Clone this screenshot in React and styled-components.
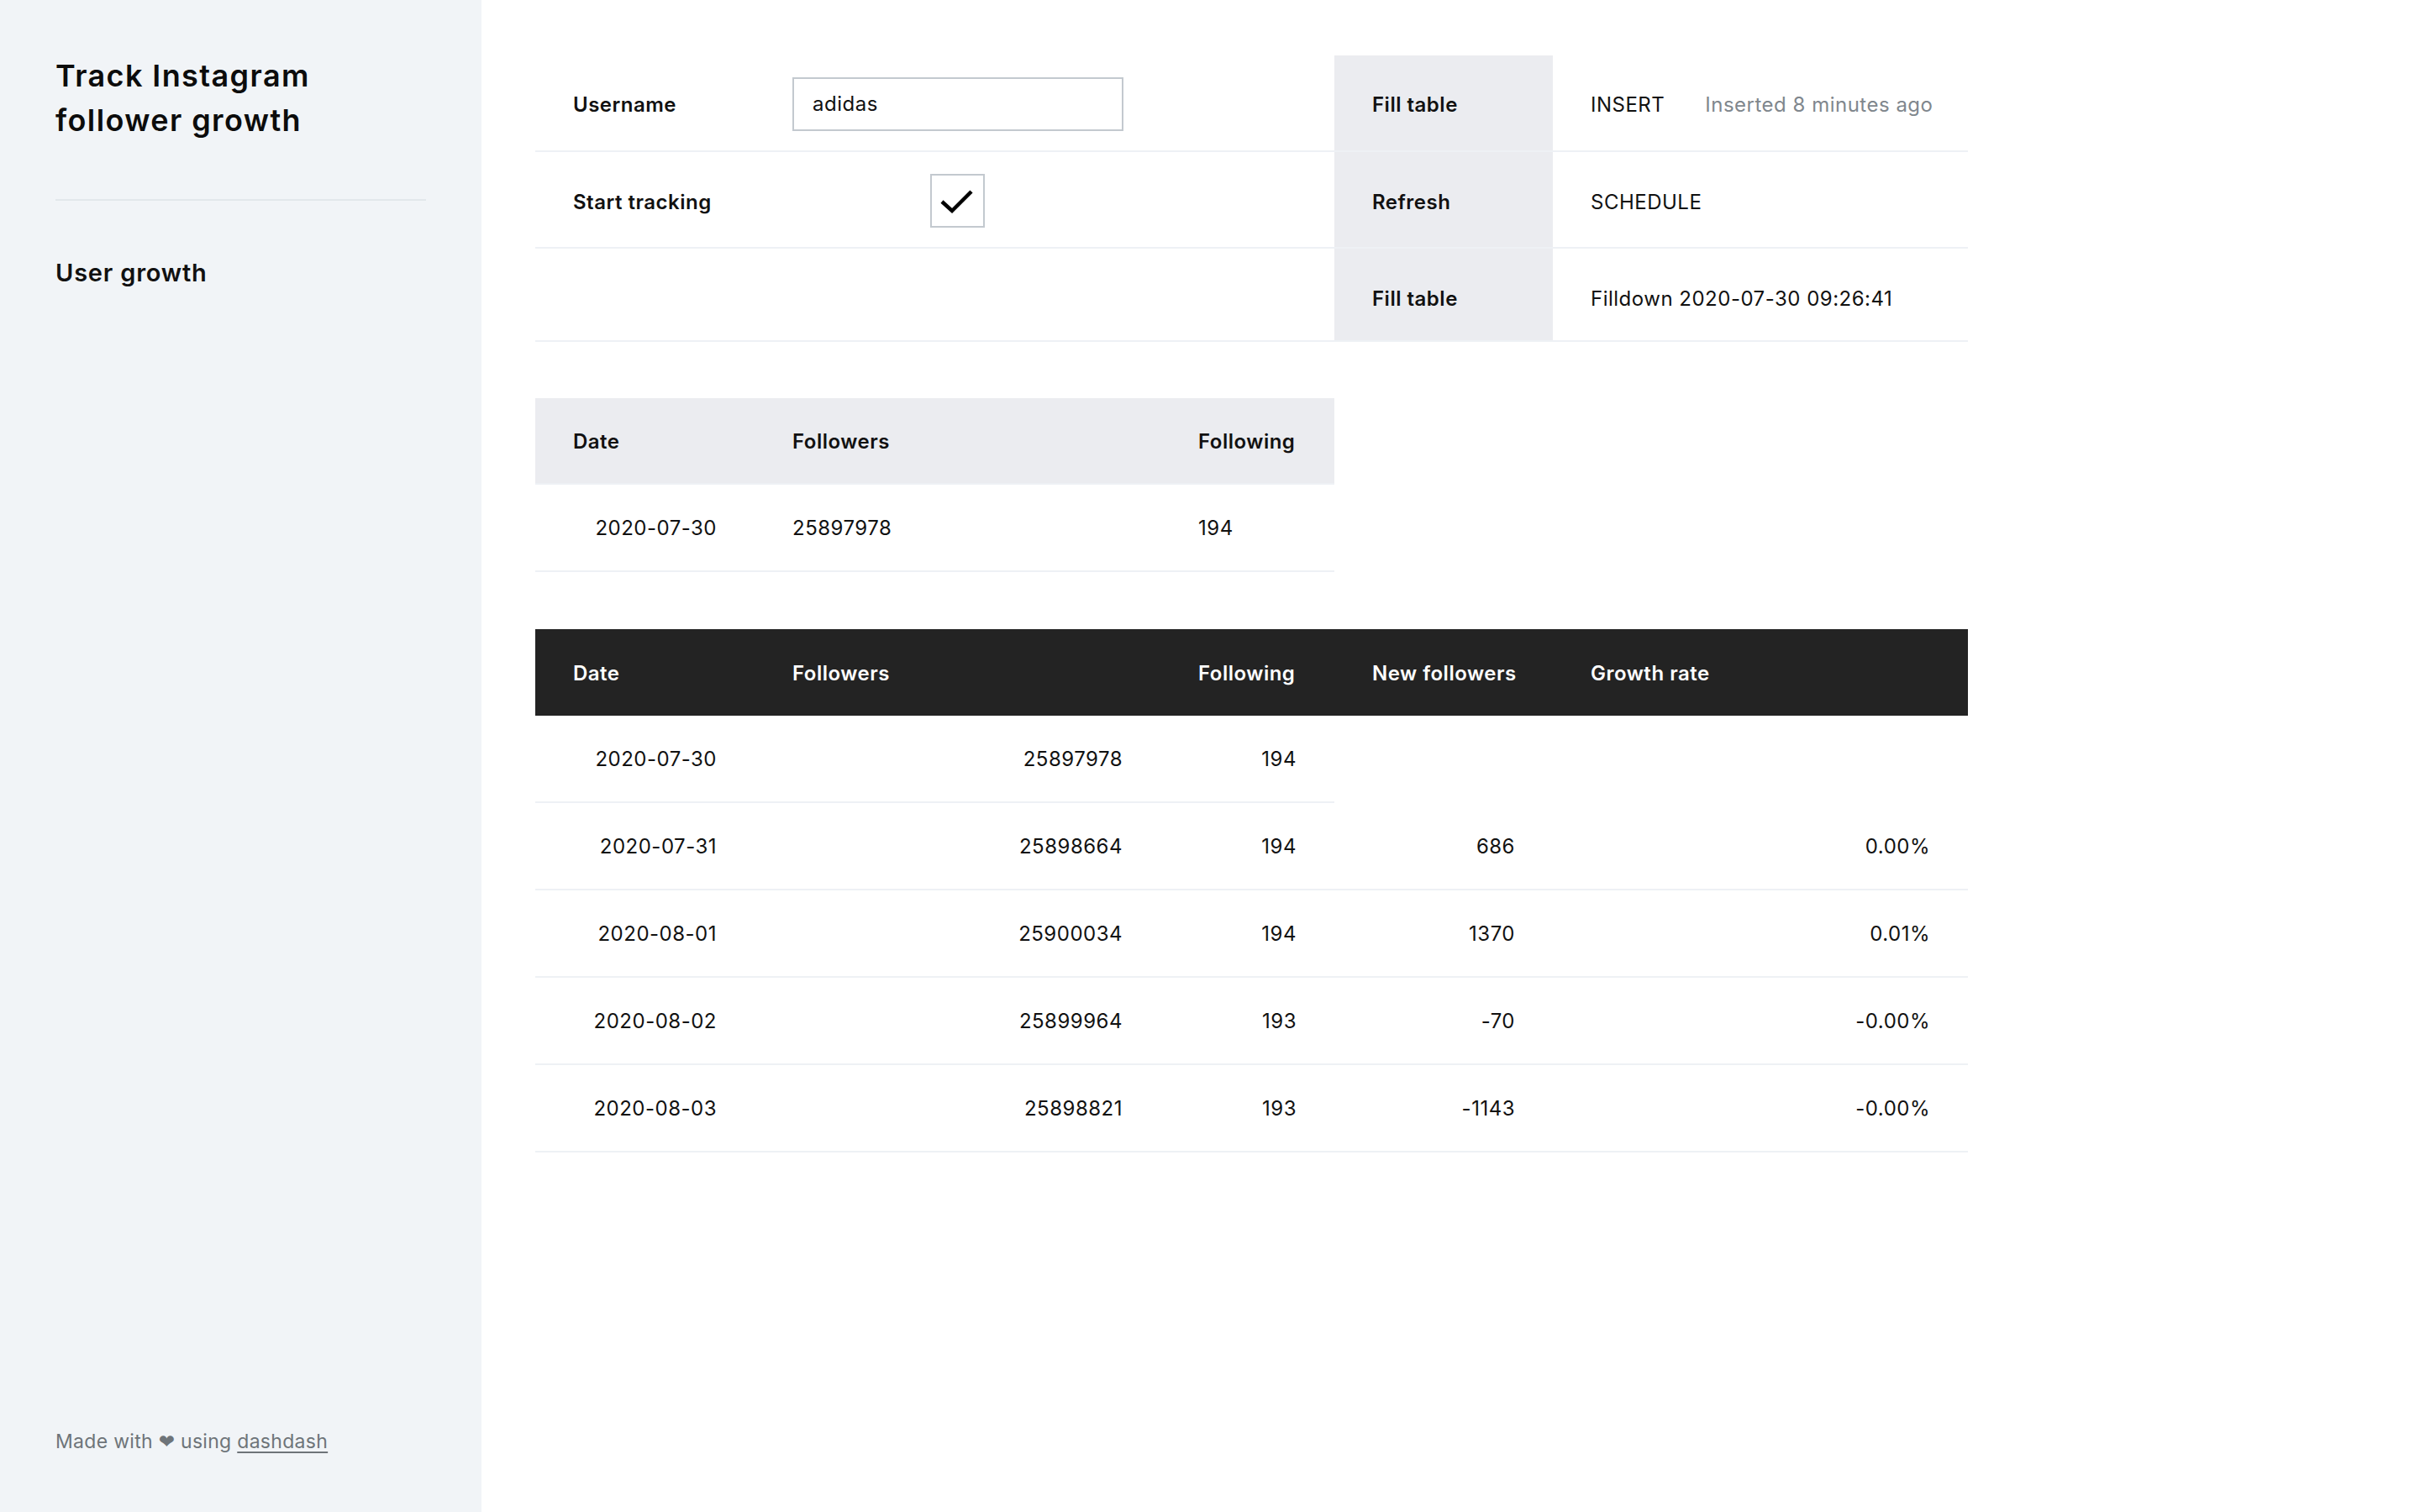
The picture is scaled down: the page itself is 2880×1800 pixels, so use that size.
import React from "react"
import styled, { createGlobalStyle } from "styled-components"

const COLS = "261px 483px 207px 260px 494px"

const GlobalStyle = createGlobalStyle`
  html, body {
    margin: 0;
    padding: 0;
    background: #fff;
  }
  body {
    font-family: Inter, "Noto Sans", "DejaVu Sans", sans-serif;
    color: #111;
    -webkit-font-smoothing: antialiased;
  }
  * { box-sizing: border-box; }
`

const Page = styled.div`
  display: flex;
  min-height: 100vh;
`

const Sidebar = styled.aside`
  width: 573px;
  flex-shrink: 0;
  background: #f1f4f7;
  padding: 64px 66px 69px;
  display: flex;
  flex-direction: column;
`

const Title = styled.h1`
  margin: 0;
  font-size: 36px;
  line-height: 53px;
  font-weight: 600;
  letter-spacing: 1.4px;
  color: #0c0c0c;
`

const Divider = styled.hr`
  border: 0;
  height: 2px;
  background: #e2e7eb;
  margin: 67px 0 0;
`

const NavItem = styled.a`
  display: block;
  margin-top: 66px;
  font-size: 29px;
  line-height: 39px;
  font-weight: 600;
  letter-spacing: 0.8px;
  color: #111;
  text-decoration: none;
`

const Footer = styled.div`
  margin-top: auto;
  font-size: 23px;
  line-height: 30px;
  letter-spacing: 0.3px;
  color: #6e7479;
  a {
    color: #6e7479;
    text-decoration: underline;
    text-underline-offset: 4px;
  }
`

const Heart = styled.span`
  font-family: "DejaVu Sans", sans-serif;
`

const Main = styled.main`
  flex: 1;
  padding: 66px 0 66px 64px;
`

const Grid = styled.div`
  display: grid;
  grid-template-columns: ${(p) => p.$cols || COLS};
  width: fit-content;
  margin-bottom: ${(p) => p.$gap || 0}px;
`

const Cell = styled.div`
  display: flex;
  align-items: center;
  justify-content: ${(p) => (p.$right ? "flex-end" : p.$center ? "center" : "flex-start")};
  height: ${(p) => p.$h || 104}px;
  padding: ${(p) => p.$drop || 0}px 45px 0;
  font-size: 24px;
  font-weight: ${(p) => (p.$bold ? 600 : 400)};
  letter-spacing: 0.5px;
  background: ${(p) => (p.$shade ? "#ebecf0" : "transparent")};
  border-bottom: ${(p) => (p.$noline ? "0" : "2px solid #eef1f5")};
  white-space: nowrap;
`

const HeadCell = styled(Cell)`
  font-weight: 600;
  height: 103px;
  padding-top: 2px;
  background: ${(p) => (p.$dark ? "#232323" : "#ebecf0")};
  color: ${(p) => (p.$dark ? "#fff" : "#111")};
  border-bottom: ${(p) => (p.$dark ? "0" : "2px solid #eef1f5")};
`

const Input = styled.input`
  width: 394px;
  height: 64px;
  border: 2px solid #c3c9cf;
  padding: 0 22px;
  font: inherit;
  font-size: 24px;
  letter-spacing: 0.5px;
  color: #111;
  background: #fff;
  outline: none;
`

const CheckBox = styled.span`
  width: 65px;
  height: 64px;
  border: 2px solid #c3c9cf;
  display: inline-flex;
  align-items: center;
  justify-content: center;
  background: #fff;
`

const Muted = styled.span`
  color: #80878d;
  margin-left: 48px;
`

function Check() {
  return (
    <CheckBox>
      <svg width="61" height="60" viewBox="0 0 61 60">
        <polyline
          points="12,31 24,42 47,19"
          fill="none"
          stroke="#000"
          strokeWidth="4.5"
          strokeLinejoin="miter"
        />
      </svg>
    </CheckBox>
  )
}

const history = [
  ["2020-07-30", "25897978", "194", "", ""],
  ["2020-07-31", "25898664", "194", "686", "0.00%"],
  ["2020-08-01", "25900034", "194", "1370", "0.01%"],
  ["2020-08-02", "25899964", "193", "-70", "-0.00%"],
  ["2020-08-03", "25898821", "193", "-1143", "-0.00%"],
]

export default function App() {
  return (
    <Page>
      <GlobalStyle />
      <Sidebar>
        <Title>
          Track Instagram
          <br />
          follower growth
        </Title>
        <Divider />
        <NavItem href="#">User growth</NavItem>
        <Footer>
          Made with <Heart>❤</Heart> using <a href="#">dashdash</a>
        </Footer>
      </Sidebar>

      <Main>
        <Grid $gap={67}>
          <Cell $bold $h={115} $drop={4}>Username</Cell>
          <Cell $h={115} $drop={2}>
            <Input defaultValue="adidas" />
          </Cell>
          <Cell $h={115} />
          <Cell $bold $shade $h={115} $drop={4}>Fill table</Cell>
          <Cell $h={115} $drop={4}>
            INSERT<Muted>Inserted 8 minutes ago</Muted>
          </Cell>

          <Cell $bold $h={115} $drop={5}>Start tracking</Cell>
          <Cell $center $h={115} $drop={2}>
            <Check />
          </Cell>
          <Cell $h={115} />
          <Cell $bold $shade $h={115} $drop={5}>Refresh</Cell>
          <Cell $h={115} $drop={5}>SCHEDULE</Cell>

          <Cell $h={111} />
          <Cell $h={111} />
          <Cell $h={111} />
          <Cell $bold $shade $h={111} $drop={9}>Fill table</Cell>
          <Cell $h={111} $drop={9}>Filldown 2020-07-30 09:26:41</Cell>
        </Grid>

        <Grid $cols="261px 483px 207px" $gap={68}>
          <HeadCell>Date</HeadCell>
          <HeadCell>Followers</HeadCell>
          <HeadCell>Following</HeadCell>
          <Cell $right>2020-07-30</Cell>
          <Cell>25897978</Cell>
          <Cell>194</Cell>
        </Grid>

        <Grid>
          <HeadCell $dark>Date</HeadCell>
          <HeadCell $dark>Followers</HeadCell>
          <HeadCell $dark>Following</HeadCell>
          <HeadCell $dark>New followers</HeadCell>
          <HeadCell $dark>Growth rate</HeadCell>
          {history.map((row, i) =>
            row.map((v, j) => (
              <Cell key={i + "-" + j} $right $noline={v === ""}>
                {v}
              </Cell>
            ))
          )}
        </Grid>
      </Main>
    </Page>
  )
}
